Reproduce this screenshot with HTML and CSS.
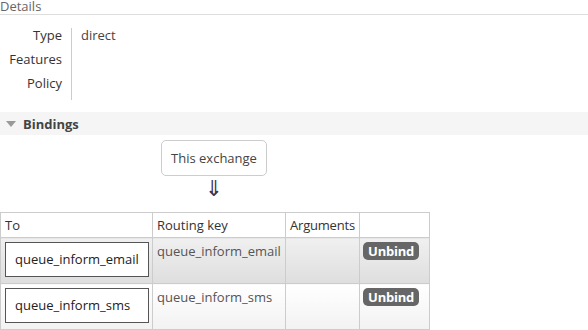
FILE: index.html
```html
<!DOCTYPE html>
<html lang="en">
<head>
    <meta charset="UTF-8">
    <title>Exchange</title>
    <link rel="stylesheet" href="styles.css">
</head>
<body>
    <!-- Details -->
    <div class="section">
        <h2 class="section-title">Details</h2>
        <table class="facts">
            <tr><th>Type</th><td>direct</td></tr>
            <tr><th>Features</th><td></td></tr>
            <tr><th>Policy</th><td></td></tr>
        </table>
    </div>

    <!-- Bindings -->
    <div class="section">
        <h2 class="section-toggle"><span class="tri"></span>Bindings</h2>
        <div class="bindings">
            <div class="exchange-box">This exchange</div>
            <div class="arrow">&dArr;</div>
        </div>
        <table class="list">
            <thead>
                <tr>
                    <th class="col-to">To</th>
                    <th class="col-key">Routing key</th>
                    <th class="col-args">Arguments</th>
                    <th class="col-act"></th>
                </tr>
            </thead>
            <tbody>
                <tr class="alt1">
                    <td><span class="queue">queue_inform_email</span></td>
                    <td>queue_inform_email</td>
                    <td></td>
                    <td><button class="unbind">Unbind</button></td>
                </tr>
                <tr class="alt2">
                    <td><span class="queue">queue_inform_sms</span></td>
                    <td>queue_inform_sms</td>
                    <td></td>
                    <td><button class="unbind">Unbind</button></td>
                </tr>
            </tbody>
        </table>
    </div>
</body>
</html>
```

FILE: styles.css
```css
/* Global */
body {
    margin: 0;
    font-family: "Open Sans", "Noto Sans", sans-serif;
    font-size: 13px;
    color: #444;
    background: #fff;
}

/* Section headers */
.section-title {
    margin: -2px 0 0 0;
    font-size: 13px;
    font-weight: normal;
    line-height: 16px;
    color: #666;
    border-bottom: 1px solid #ddd;
}

.section-toggle {
    display: flex;
    align-items: center;
    margin: 12px 0 0 0;
    height: 23px;
    padding-left: 6px;
    background: #f5f5f5;
    font-size: 13px;
    font-weight: bold;
    color: #444;
}

.tri {
    width: 0;
    height: 0;
    border-left: 5px solid transparent;
    border-right: 5px solid transparent;
    border-top: 6px solid #999;
    margin-right: 7px;
}

/* Details facts table */
.facts {
    border-collapse: collapse;
    margin: 13px 0 0 6px;
}

.facts th,
.facts td {
    height: 24px;
    padding: 0;
    line-height: 15px;
    vertical-align: top;
}

.facts th {
    font-weight: normal;
    text-align: right;
    color: #333;
    padding-right: 9px;
    width: 56px;
    border-right: 1px solid #ccc;
}

.facts td {
    padding-left: 9px;
    color: #444;
}

/* Exchange box + arrow */
.bindings {
    display: flex;
    flex-direction: column;
    align-items: center;
    width: 428px;
    padding-top: 5px;
}

.exchange-box {
    border: 1px solid #ccc;
    border-radius: 5px;
    padding: 8px 9px;
    color: #444;
}

.arrow {
    font-family: "DejaVu Sans", sans-serif;
    font-size: 22px;
    color: #3a3450;
    line-height: 22px;
    margin: 2px 0 12px 0;
}

/* Bindings list */
.list {
    border-collapse: collapse;
    border: 1px solid #ccc;
}

.list th {
    font-weight: normal;
    text-align: left;
    color: #333;
    padding: 3px 4px;
    border: 1px solid #ccc;
    height: 17px;
}

.list td {
    border: 1px solid #ccc;
    padding: 4px 4px;
    vertical-align: top;
    color: #555;
    height: 37px;
}

.col-to { width: 143px; }
.col-key { width: 124px; }
.list th.col-args { width: 68px; padding-right: 1px; padding-left: 4px; letter-spacing: -0.2px; }
.col-act { width: 61px; }

.alt1 td {
    background: linear-gradient(#f0f0f0, #dedede);
}

.alt2 td {
    background: linear-gradient(#fff, #f2f2f2);
}

.list td:first-child {
    padding: 4px 3px 4px 4px;
}

.list td:last-child {
    padding-left: 3px;
}

.queue {
    display: block;
    border: 1px solid #555;
    background: #fff;
    color: #222;
    padding: 8px 9px;
    line-height: 17px;
}

.unbind {
    font-family: inherit;
    font-size: 13px;
    line-height: 14px;
    font-weight: bold;
    color: #fff;
    background: #666;
    border: none;
    border-radius: 5px;
    padding: 2px 5px;
    margin: 0;
    letter-spacing: -0.2px;
}
```
